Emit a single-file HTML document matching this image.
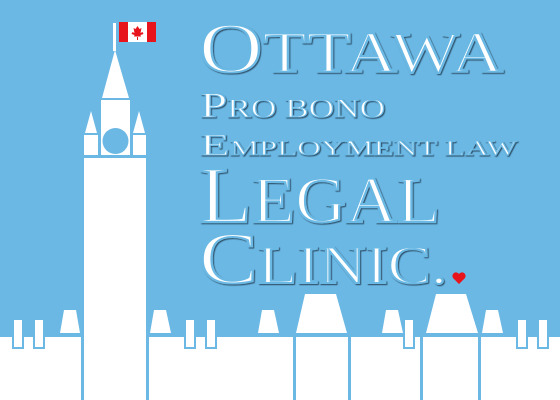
<!DOCTYPE html>
<html><head><meta charset="utf-8"><style>
html,body{margin:0;padding:0;width:560px;height:400px;overflow:hidden;background:#6bb8e4}
svg{display:block}
text{font-family:"Liberation Serif",serif;fill:#fff;stroke:#6bb8e4;paint-order:fill stroke;}
</style></head><body>
<svg width="560" height="400" viewBox="0 0 560 400" xmlns="http://www.w3.org/2000/svg">
<defs><filter id="sh" x="-5%" y="-10%" width="110%" height="130%"><feDropShadow dx="1" dy="1" stdDeviation="0.5" flood-color="#1a2a40" flood-opacity="0.8"/></filter></defs>
<rect width="560" height="400" fill="#6bb8e4"/>
<rect x="113" y="23" width="3" height="28" fill="#fff"/>
<rect x="119" y="22" width="37" height="20" fill="#fff"/>
<rect x="119" y="22" width="9" height="20" fill="#e8141c"/>
<rect x="147" y="22" width="9" height="20" fill="#e8141c"/>
<path d="M137.5 26 l2 3 2-1 -1 5 2-1 1 2 -3 1 .5 1.5 h-7 l.5-1.5 -3-1 1-2 2 1 -1-5 2 1z" fill="#e8141c"/>
<rect x="137" y="37" width="1" height="3" fill="#e8141c"/>
<g fill="#fff">
<polygon points="115,50 102,98 129,98"/>
<rect x="101" y="100" width="29" height="55"/>
<polygon points="91,111 85,133 97,133"/>
<polygon points="139,111 133,133 145,133"/>
<rect x="84" y="135" width="14" height="20"/>
<rect x="133" y="135" width="13" height="20"/>
<rect x="84" y="158" width="62" height="242"/>
</g>
<circle cx="115.5" cy="141" r="13" fill="#6bb8e4"/>
<g fill="#fff">
<rect x="0" y="337" width="560" height="63"/>
<polygon points="64,310 76,310 80,333 60,333"/>
<polygon points="154,310 166,310 171,333 150,333"/>
<polygon points="262,310 274,310 279,333 258,333"/>
<polygon points="386,310 398,310 403,333 382,333"/>
<polygon points="486,310 498,310 503,333 482,333"/>
<polygon points="305,294 336,294 347,333 296,333"/>
<polygon points="436,294 466,294 478,333 426,333"/>
</g>
<g fill="#fff" stroke="#6bb8e4" stroke-width="2">
<rect x="13" y="322" width="10" height="26"/>
<rect x="34" y="322" width="10" height="26"/>
<rect x="185" y="322" width="10" height="26"/>
<rect x="206" y="322" width="10" height="26"/>
<rect x="404" y="322" width="10" height="26"/>
<rect x="517" y="322" width="10" height="26"/>
<rect x="538" y="322" width="10" height="26"/>
</g>
<g fill="#fff">
<rect x="14" y="320" width="8" height="20"/><rect x="35" y="320" width="8" height="20"/>
<rect x="186" y="320" width="8" height="20"/><rect x="207" y="320" width="8" height="20"/>
<rect x="405" y="320" width="8" height="20"/>
<rect x="518" y="320" width="8" height="20"/><rect x="539" y="320" width="8" height="20"/>
</g>
<g fill="#6bb8e4">
<rect x="81" y="337" width="3" height="63"/>
<rect x="146" y="337" width="3" height="63"/>
<rect x="293" y="337" width="3" height="63"/>
<rect x="348" y="337" width="3" height="63"/>
<rect x="420" y="337" width="3" height="63"/>
<rect x="478" y="337" width="3" height="63"/>
</g>
<rect x="84" y="337" width="62" height="63" fill="#fff"/>
<g filter="url(#sh)">
<text x="199" y="72" textLength="304" lengthAdjust="spacingAndGlyphs" stroke-width="2"><tspan font-size="71">O</tspan><tspan font-size="58">TTAWA</tspan></text>
<text x="200" y="117" textLength="185" lengthAdjust="spacingAndGlyphs" stroke-width="1"><tspan font-size="36">P</tspan><tspan font-size="26">RO BONO</tspan></text>
<text x="200" y="155" textLength="317" lengthAdjust="spacingAndGlyphs" stroke-width="0.9"><tspan font-size="31">E</tspan><tspan font-size="21">MPLOYMENT LAW</tspan></text>
<text x="199" y="222" textLength="241" lengthAdjust="spacingAndGlyphs" stroke-width="2.2"><tspan font-size="81">L</tspan><tspan font-size="66">EGAL</tspan></text>
<text x="199" y="283" textLength="248" lengthAdjust="spacingAndGlyphs" stroke-width="2"><tspan font-size="73">C</tspan><tspan font-size="54">LINIC.</tspan></text>
</g>
<path d="M459 284 l-6-6 a3.3 3.3 0 0 1 6-4 a3.3 3.3 0 0 1 6 4z" fill="#e8141c"/>
</svg>
</body></html>
